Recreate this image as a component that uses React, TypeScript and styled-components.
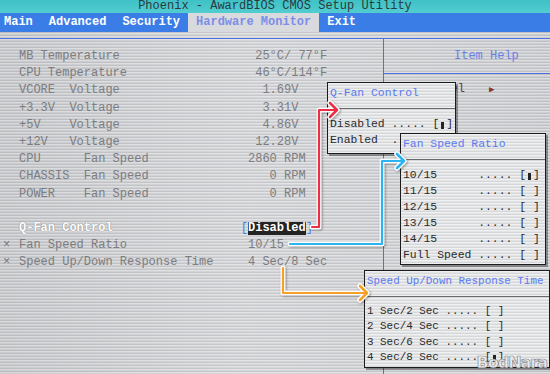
//#region ----- IMPORTS -----
import styled, { createGlobalStyle } from "styled-components"
//#endregion

//#region ----- DATA -----
const MONO = `"Liberation Mono", "DejaVu Sans Mono", monospace`
const BIOS_BLUE = "#4b72df"

const menus = ["Main", "Advanced", "Security", "Hardware Monitor", "Exit"]

const readings = [
  { label: "MB Temperature", value: " 25°C/ 77°F" },
  { label: "CPU Temperature", value: " 46°C/114°F" },
  { label: "VCORE  Voltage", value: "  1.69V" },
  { label: "+3.3V  Voltage", value: "  3.31V" },
  { label: "+5V    Voltage", value: "  4.86V" },
  { label: "+12V   Voltage", value: " 12.28V" },
  { label: "CPU      Fan Speed", value: "2860 RPM" },
  { label: "CHASSIS  Fan Speed", value: "   0 RPM" },
  { label: "POWER    Fan Speed", value: "   0 RPM" },
]

const lockedRows = [
  { label: "Fan Speed Ratio", value: "10/15" },
  { label: "Speed Up/Down Response Time", value: "4 Sec/8 Sec" },
]

type Choice = { text: string; checked?: boolean }

const popups = [
  {
    title: "Q-Fan Control",
    left: 327, top: 82, width: 129, height: 72, size: 11.4, line: 16, layer: 1,
    items: [
      { text: "Disabled ..... ", checked: true },
      { text: "Enabled  ..... " },
    ] as Choice[],
  },
  {
    title: "Fan Speed Ratio",
    left: 400, top: 133, width: 146, height: 132, size: 11.4, line: 16, layer: 2,
    items: [
      { text: "10/15      ..... ", checked: true },
      { text: "11/15      ..... " },
      { text: "12/15      ..... " },
      { text: "13/15      ..... " },
      { text: "14/15      ..... " },
      { text: "Full Speed ..... " },
    ] as Choice[],
  },
  {
    title: "Speed Up/Down Response Time",
    left: 364, top: 270, width: 186, height: 98, size: 10.9, line: 15.3, layer: 2,
    items: [
      { text: "1 Sec/2 Sec ..... " },
      { text: "2 Sec/4 Sec ..... " },
      { text: "3 Sec/6 Sec ..... " },
      { text: "4 Sec/8 Sec ..... ", checked: true },
    ] as Choice[],
  },
]

const connectors = [
  { color: "#ec2f45", path: "M312 227 H319 V110 H336", head: "M330 103 L337 110 L330 117" },
  { color: "#2cb3f2", path: "M290 244 H382 V161 H403", head: "M397 154 L404 161 L397 168" },
  { color: "#f6a02a", path: "M283 268 V293 H366", head: "M360 286 L367 293 L360 300" },
]
//#endregion

export default function App() {
  //#region ----- RENDER -----
  return (
    <>
      <GlobalStyle />
      <Screen>
        <TitleBar>Phoenix - AwardBIOS CMOS Setup Utility</TitleBar>
        <MenuBar>
          {menus.map((menu) => (
            <MenuItem key={menu} $active={menu === "Hardware Monitor"}>
              {menu}
            </MenuItem>
          ))}
        </MenuBar>

        <Body>
          <SettingsPanel>
            {readings.map((row) => (
              <SettingRow key={row.label}>
                <Marker />
                <Label>{row.label}</Label>
                <Value>{row.value}</Value>
              </SettingRow>
            ))}
            <SettingRow />
            <SettingRow>
              <Marker />
              <ActiveLabel>Q-Fan Control</ActiveLabel>
              <Value>
                <Bracket $open>[</Bracket>
                <Selected>Disabled</Selected>
                <Bracket>]</Bracket>
              </Value>
            </SettingRow>
            {lockedRows.map((row) => (
              <SettingRow key={row.label}>
                <Marker>×</Marker>
                <Label>{row.label}</Label>
                <Value>{row.value}</Value>
              </SettingRow>
            ))}
          </SettingsPanel>

          <HelpPanel>
            <HelpHeader>Item Help</HelpHeader>
            <HelpBody>
              Menu Level<Pointer>▶</Pointer>
            </HelpBody>
          </HelpPanel>
        </Body>

        {popups.map((popup) => (
          <PopupBox
            key={popup.title}
            $left={popup.left}
            $top={popup.top}
            $width={popup.width}
            $height={popup.height}
            $layer={popup.layer}
            $size={popup.size}
          >
            <PopupTitle>{popup.title}</PopupTitle>
            <PopupList $line={popup.line}>
              {popup.items.map((item) => (
                <PopupItem key={item.text}>
                  {item.text}[<CheckSlot>{item.checked && <CheckMark />}</CheckSlot>]
                </PopupItem>
              ))}
            </PopupList>
          </PopupBox>
        ))}

        <Connectors viewBox="0 0 550 374">
          {connectors.map((c) => (
            <g key={c.color} fill="none" strokeLinecap="round" strokeLinejoin="round">
              <path d={c.path} stroke="#fff" strokeWidth={5} />
              <path d={c.head} stroke="#fff" strokeWidth={5.5} />
              <path d={c.path} stroke={c.color} strokeWidth={2.2} />
              <path d={c.head} stroke={c.color} strokeWidth={2.6} />
            </g>
          ))}
        </Connectors>

        <Watermark>BodNara</Watermark>
      </Screen>
    </>
  )
  //#endregion
}

//#region ----- STYLED COMPONENTS -----
const GlobalStyle = createGlobalStyle`
  html, body {
    margin: 0;
    padding: 0;
    background: #d4d5d7;
  }
  body {
    font-family: ${MONO};
  }
`

const Screen = styled.div`
  position: relative;
  width: 550px;
  height: 374px;
  overflow: hidden;
  display: flex;
  flex-direction: column;
  font-family: ${MONO};
  white-space: pre;
  background-color: #d2d3d6;
  background-image:
    linear-gradient(90deg, rgba(0, 0, 0, 0.04), rgba(255, 255, 255, 0.08) 45%, rgba(0, 0, 0, 0.02)),
    repeating-linear-gradient(
      180deg,
      rgba(255, 255, 255, 0.35) 0 1px,
      rgba(0, 0, 0, 0) 1px 2px,
      rgba(0, 0, 0, 0.07) 2px 3px
    );
`

const TitleBar = styled.div`
  height: 13px;
  line-height: 13px;
  font-size: 12px;
  text-align: center;
  color: #2b3a3c;
  background: linear-gradient(180deg, #3fc1c6, #52cdd0);
`

const MenuBar = styled.div`
  display: flex;
  height: 19px;
  background: #3a7de6;
  margin-bottom: 6px;

  & > span:first-child {
    margin-left: -4px;
  }
`

const MenuItem = styled.span<{ $active?: boolean }>`
  padding: 0 8px;
  line-height: 19px;
  font-size: 12px;
  font-weight: 700;
  color: ${({ $active }) => ($active ? "#7d8ee8" : "#ffffff")};
  background: ${({ $active }) => ($active ? "#d9dadd" : "transparent")};
`

const Body = styled.div`
  flex: 1;
  display: grid;
  grid-template-columns: 383px 1fr;
  border-top: 1.5px solid ${BIOS_BLUE};
`

const SettingsPanel = styled.div`
  padding-top: 9px;
`

const SettingRow = styled.div`
  display: grid;
  grid-template-columns: 19px 229px auto;
  height: 17.2px;
  line-height: 17.2px;
  font-size: 12px;
  color: #7c7d81;
`

const Marker = styled.span`
  padding-left: 3px;
  color: #76777b;
`

const Label = styled.span``

const ActiveLabel = styled.span`
  color: #ffffff;
  font-weight: 700;
  text-shadow: 0 0 1px #8a8a8a, 0 0 1px #8a8a8a;
`

const Value = styled.span``

const Bracket = styled.span<{ $open?: boolean }>`
  color: #4c7cf0;
  margin-left: ${({ $open }) => ($open ? "-7.2px" : "0")};
`

const Selected = styled.span`
  display: inline-block;
  line-height: 13px;
  background: #232323;
  color: #ffffff;
  font-weight: 700;
`

const HelpPanel = styled.div`
  border-left: 1.5px solid ${BIOS_BLUE};
`

const HelpHeader = styled.div`
  box-sizing: border-box;
  height: 34.5px;
  line-height: 35px;
  padding-left: 70px;
  font-size: 12px;
  color: #6a80e6;
  border-bottom: 1.5px solid ${BIOS_BLUE};
`

const HelpBody = styled.div`
  padding: 7.5px 0 0 9px;
  line-height: 17px;
  font-size: 12px;
  color: #5e3c3e;
`

const Pointer = styled.span`
  margin-left: 24px;
  font-size: 9px;
  color: #8b3434;
`

const PopupBox = styled.div<{
  $left: number
  $top: number
  $width: number
  $height: number
  $layer: number
  $size: number
}>`
  position: absolute;
  left: ${({ $left }) => $left}px;
  top: ${({ $top }) => $top}px;
  width: ${({ $width }) => $width}px;
  height: ${({ $height }) => $height}px;
  z-index: ${({ $layer }) => $layer};
  box-sizing: border-box;
  display: flex;
  flex-direction: column;
  font-size: ${({ $size }) => $size}px;
  border: 1.5px solid #1c1c1c;
  box-shadow: 2px 2px 0 rgba(0, 0, 0, 0.35);
  background-color: #e3e4e6;
  background-image: repeating-linear-gradient(
    180deg,
    rgba(255, 255, 255, 0.45) 0 1px,
    rgba(0, 0, 0, 0) 1px 2px,
    rgba(0, 0, 0, 0.06) 2px 3px
  );
`

const PopupTitle = styled.div`
  padding: 2px 2px 7px;
  line-height: 16px;
  color: #5b7cf1;
  border-bottom: 1px solid #6a6a6a;
`

const PopupList = styled.div<{ $line: number }>`
  padding: 7px 2px 0;
  line-height: ${({ $line }) => $line}px;
  color: #2b2b2d;
`

const PopupItem = styled.div``

const CheckSlot = styled.span`
  display: inline-flex;
  justify-content: center;
  align-items: center;
  width: 1ch;
  height: 1em;
  vertical-align: -2px;
`

const CheckMark = styled.span`
  width: 3px;
  height: 7px;
  background: #242424;
`

const Connectors = styled.svg`
  position: absolute;
  inset: 0;
  width: 550px;
  height: 374px;
  z-index: 5;
  pointer-events: none;
  filter: drop-shadow(1px 1px 1px rgba(0, 0, 0, 0.35));
`

const Watermark = styled.div`
  position: absolute;
  right: 3px;
  bottom: 2px;
  z-index: 6;
  font-family: "DejaVu Sans", sans-serif;
  font-size: 16px;
  font-weight: 700;
  letter-spacing: -1px;
  color: rgba(236, 236, 238, 0.85);
  -webkit-text-stroke: 0.7px rgba(90, 90, 95, 0.7);
`
//#endregion
